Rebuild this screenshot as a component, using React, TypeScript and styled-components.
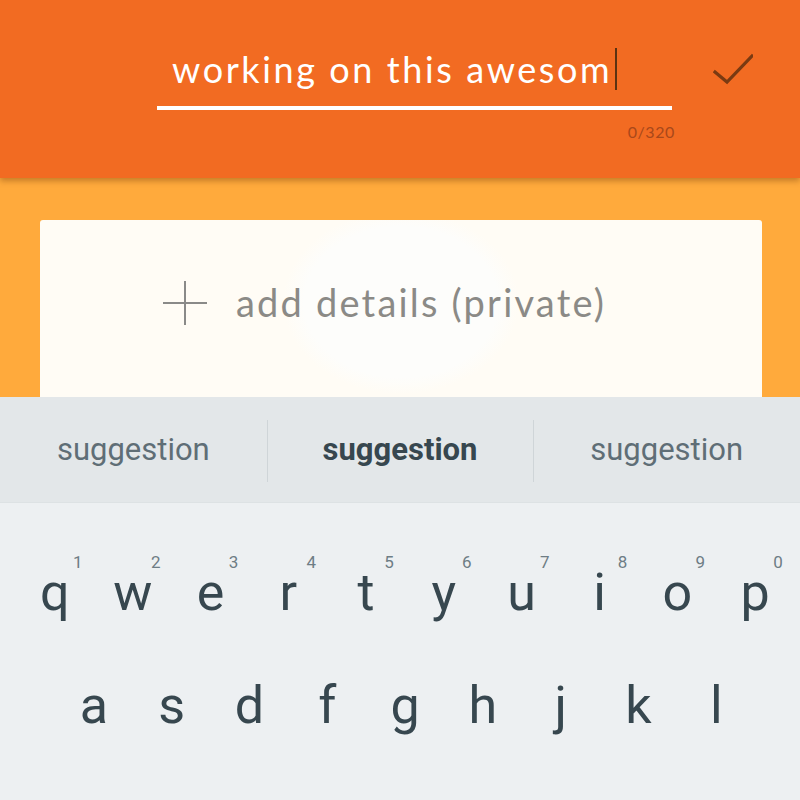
import React from 'react';
import styled, { createGlobalStyle } from 'styled-components';

const GlobalStyle = createGlobalStyle`
  html, body {
    margin: 0;
    padding: 0;
    width: 800px;
    height: 800px;
    overflow: hidden;
  }
  * {
    box-sizing: border-box;
  }
`;

const Screen = styled.div`
  width: 800px;
  height: 800px;
  display: flex;
  flex-direction: column;
  background: #ffaa3c;
`;

const Header = styled.header`
  position: relative;
  z-index: 2;
  height: 178px;
  flex-shrink: 0;
  display: flex;
  align-items: flex-start;
  padding-left: 157px;
  background: #f26b22;
  box-shadow: 0 3px 6px rgba(90, 40, 0, 0.35);
`;

const InputColumn = styled.div`
  width: 515px;
  padding-top: 44px;
  display: flex;
  flex-direction: column;
`;

const TitleLine = styled.div`
  display: flex;
  align-items: center;
  height: 50px;
  padding-left: 15px;
  font-family: Lato, 'Open Sans', sans-serif;
  font-size: 36px;
  letter-spacing: 2.6px;
  color: #ffffff;
  white-space: nowrap;
`;

const Cursor = styled.span`
  display: inline-block;
  width: 2px;
  height: 42px;
  margin-left: 3px;
  background: #5b3212;
`;

const Underline = styled.div`
  height: 4px;
  margin-top: 12px;
  background: #ffffff;
`;

const Counter = styled.div`
  margin-top: 12px;
  margin-right: -3px;
  height: 20px;
  line-height: 20px;
  text-align: right;
  font-family: Lato, sans-serif;
  font-size: 16px;
  letter-spacing: 0.6px;
  color: #a9481a;
`;

const CheckButton = styled.button`
  margin: 49px 0 0 41px;
  width: 40px;
  height: 40px;
  padding: 0;
  border: none;
  background: none;
  display: flex;
`;

const Body = styled.main`
  flex: 1;
  padding: 42px 38px 0 40px;
  overflow: hidden;
`;

const DetailsCard = styled.div`
  height: 177px;
  display: flex;
  align-items: center;
  gap: 29px;
  padding: 0 0 12px 123px;
  border-radius: 3px 3px 0 0;
  background: radial-gradient(ellipse 118px 92px at 361px 82px, #fdfdfb 0, #fdfdfb 82%, #fffcf5 100%), #fffcf5;
`;

const DetailsText = styled.span`
  font-family: Lato, 'Open Sans', sans-serif;
  font-size: 38px;
  letter-spacing: 2.2px;
  color: #8b8a86;
  margin-top: -2px;
`;

const Keyboard = styled.section`
  flex-shrink: 0;
  height: 403px;
  display: flex;
  flex-direction: column;
  background: #edf0f2;
  font-family: Roboto, 'Noto Sans', sans-serif;
`;

const SuggestionBar = styled.div`
  height: 106px;
  display: grid;
  grid-template-columns: repeat(3, 1fr);
  align-items: center;
  background: #e3e7e9;
  border-bottom: 1px solid #dde2e4;
`;

const Suggestion = styled.div<{ $primary?: boolean; $divider?: boolean }>`
  position: relative;
  text-align: center;
  font-size: 31px;
  font-weight: ${({ $primary }) => ($primary ? 700 : 400)};
  color: ${({ $primary }) => ($primary ? '#37474f' : '#5f6e76')};

  &::before {
    content: '';
    display: ${({ $divider }) => ($divider ? 'block' : 'none')};
    position: absolute;
    left: 0;
    top: 50%;
    width: 1px;
    height: 62px;
    margin-top: -30px;
    background: #cfd5d8;
  }
`;

const Keys = styled.div`
  padding-top: 33px;
  display: flex;
  flex-direction: column;
`;

const KeyRow = styled.div<{ $offset: number }>`
  display: flex;
  padding-left: ${({ $offset }) => $offset}px;
`;

const Key = styled.div`
  position: relative;
  width: 77.8px;
  height: 113px;
  line-height: 113px;
  text-align: center;
  font-size: 52px;
  color: #37474f;
`;

const Hint = styled.span`
  position: absolute;
  top: 18px;
  left: 50%;
  width: 20px;
  margin-left: 13px;
  line-height: 17px;
  font-size: 17px;
  text-align: center;
  color: #6e7d85;
`;

const topRow = ['q', 'w', 'e', 'r', 't', 'y', 'u', 'i', 'o', 'p'];
const hints = ['1', '2', '3', '4', '5', '6', '7', '8', '9', '0'];
const homeRow = ['a', 's', 'd', 'f', 'g', 'h', 'j', 'k', 'l'];

const CheckIcon = () => (
  <svg width="40" height="40" viewBox="0 0 40 40" fill="none">
    <path d="M2 23 L14 33 L39 7" stroke="#7a3a12" strokeWidth="3.2" strokeLinecap="square" />
  </svg>
);

const PlusIcon = () => (
  <svg width="44" height="44" viewBox="0 0 44 44" fill="none">
    <path d="M22 0 V44 M0 22 H44" stroke="#8a8a88" strokeWidth="2" />
  </svg>
);

const App: React.FC = () => {
  return (
    <>
      <GlobalStyle />
      <Screen>
        <Header>
          <InputColumn>
            <TitleLine>
              working on this awesom
              <Cursor />
            </TitleLine>
            <Underline />
            <Counter>0/320</Counter>
          </InputColumn>
          <CheckButton aria-label="save">
            <CheckIcon />
          </CheckButton>
        </Header>

        <Body>
          <DetailsCard>
            <PlusIcon />
            <DetailsText>add details (private)</DetailsText>
          </DetailsCard>
        </Body>

        <Keyboard>
          <SuggestionBar>
            <Suggestion>suggestion</Suggestion>
            <Suggestion $primary $divider>
              suggestion
            </Suggestion>
            <Suggestion $divider>suggestion</Suggestion>
          </SuggestionBar>
          <Keys>
            <KeyRow $offset={16}>
              {topRow.map((letter, i) => (
                <Key key={letter}>
                  <Hint>{hints[i]}</Hint>
                  {letter}
                </Key>
              ))}
            </KeyRow>
            <KeyRow $offset={55}>
              {homeRow.map((letter) => (
                <Key key={letter}>{letter}</Key>
              ))}
            </KeyRow>
          </Keys>
        </Keyboard>
      </Screen>
    </>
  );
};

export default App;
